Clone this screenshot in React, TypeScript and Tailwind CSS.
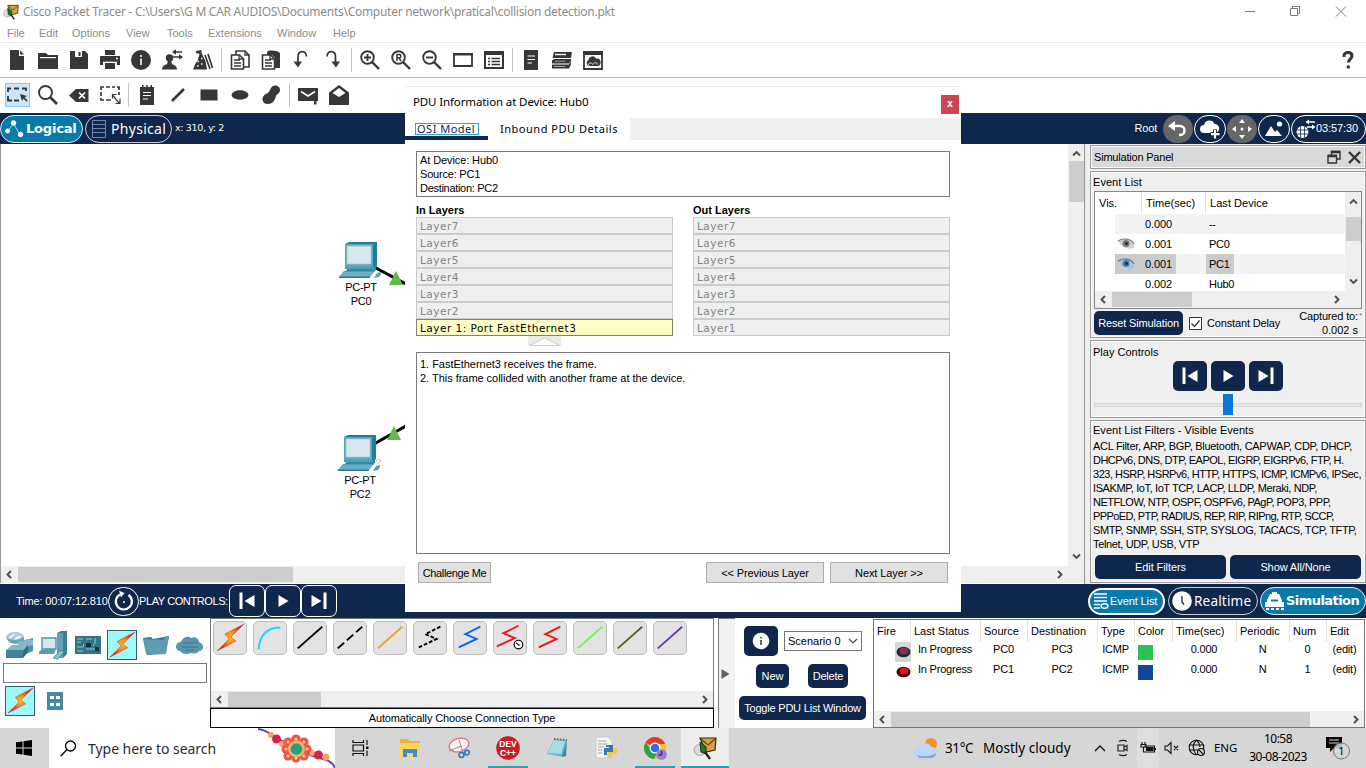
import React from "react";

type P = { children?: React.ReactNode; className?: string };

const Ic = ({ children, s = 22, c = "text-[#373737]", vb = "0 0 22 22" }: { children: React.ReactNode; s?: number; c?: string; vb?: string }) => (
  <svg width={s} height={s} viewBox={vb} className={`${c} block shrink-0`} fill="currentColor">
    {children}
  </svg>
);

const Tool = ({ children, active }: { children: React.ReactNode; active?: boolean }) => (
  <div className="flex h-full w-[31px] shrink-0 items-center justify-center">
    <div className={active ? "flex h-[24px] w-[25px] items-center justify-center border border-[#8fc6f0] bg-[#cbe6fb]" : ""}>
      <Ic>{children}</Ic>
    </div>
  </div>
);

const Sep = () => (
  <div className="flex h-full w-[6px] shrink-0 items-center justify-center">
    <div className="h-[24px] w-px bg-[#c4c4c4]" />
  </div>
);

const Chev = ({ d, className = "" }: { d: "l" | "r" | "u" | "d"; className?: string }) => {
  const p = { l: "M7 2 3.5 5.5 7 9", r: "M4 2 7.5 5.5 4 9", u: "M2 7.5 5.5 4 9 7.5", d: "M2 3.5 5.5 7 9 3.5" }[d];
  return (
    <svg width="11" height="11" viewBox="0 0 11 11" className={`block shrink-0 ${className}`} fill="none" stroke="#4e4e4e" strokeWidth="1.9">
      <path d={p} />
    </svg>
  );
};

const stroke = (w: number) => ({ fill: "none", stroke: "currentColor", strokeWidth: w });

const Lens = ({ children }: P) => (
  <>
    <circle cx="8.5" cy="8.5" r="6.3" {...stroke(1.9)} />
    <path d="m13 13 7 7" {...stroke(2.4)} />
    {children}
  </>
);

const Toolbar1 = () => (
  <div className="flex h-[35px] items-center border-b border-[#bdbdbd] bg-white pl-[1.5px]">
    <Tool><path d="M4 1h9v6h5v14H4z" /><path d="M14 1.2 18 5.6h-4z" /></Tool>
    <Tool><path d="M1 4h8l2 2h10v14H1z" /><path d="M3 8.6h16" stroke="#fff" strokeWidth="1.2" /></Tool>
    <Tool><path d="M2 2h15l3 3v15H2z" /><path d="M7 2h7v6H7z" fill="#fff" /><path d="M10.5 3h2v4h-2z" /></Tool>
    <Tool>
      <path d="M6 1h10v5H6zM1 7h20v9h-3v-3H4v3H1z" /><path d="M6 14h10v6H6z" />
      <path d="M4 13.2h14" stroke="#fff" strokeWidth="1" /><circle cx="18" cy="9.5" r="1" fill="#fff" />
    </Tool>
    <Tool><circle cx="11" cy="11" r="10" /><path d="M10 9.5h2V16h-2zM10 6h2v2h-2z" fill="#fff" opacity=".8" /></Tool>
    <Tool>
      <circle cx="8.5" cy="9" r="3.7" /><path d="M1 20.500c0-3.500 3-4.500 5-5.500l1-3h3l1 3c2 1 5 2 5 5.500z" />
      <path d="M12 3h9M12 8h9" {...stroke(1.3)} /><path d="m15 .3-4 2.700 4 2.700zM18 5.300l4 2.700-4 2.700z" />
    </Tool>
    <Tool>
      <path d="M4 2 9.500 1v3l4 8 1.500 8.500H1l2-5 3-5 1.500-5.500L4 4z" /><path d="m13 6 5 14M16 5l4.500 14" {...stroke(1.700)} />
      <path d="M5.500 12.500H7M9 9.500h1.500M9 15h1.500M5 17h1.500" stroke="#fff" strokeWidth="1.300" />
    </Tool>
    <Sep />
    <Tool>
      <path d="M7 6V2h9l4 4v12h-5" {...stroke(1.600)} /><path d="M2.500 6h8l4 4v10h-12z" {...stroke(1.600)} />
      <path d="M5 11h6M5 14h7M5 17h7M16 2v4h4M10 6v4h4" {...stroke(1.300)} />
    </Tool>
    <Tool>
      <path d="M7 3c2-2 9-2 13 1v15h-5V9l-3-3H7z" /><path d="M2.500 6h8l4 4v10h-12z" {...stroke(1.600)} />
      <path d="M5 11h6M5 14h7M5 17h7M10 6v4h4" {...stroke(1.300)} />
    </Tool>
    <Tool><path d="M15.500 7.500C15 1 7 1 7 8v6" {...stroke(1.700)} /><path d="M2.500 12.500h8.500l-4 6z" /></Tool>
    <Tool><path d="M5 7.500C5.500 1 13.500 1 13.500 8v6" {...stroke(1.700)} /><path d="M9.500 12.500H18l-4 6z" /></Tool>
    <Sep />
    <Tool><Lens><path d="M5 8.500h7M8.500 5v7" {...stroke(1.900)} /></Lens></Tool>
    <Tool><Lens><path d="M7 12V5.500h2.200a1.600 1.600 0 0 1 0 3.300H7M9 8.800l2 3.200" {...stroke(1.500)} /></Lens></Tool>
    <Tool><Lens><path d="M5 8.500h7" {...stroke(1.900)} /></Lens></Tool>
    <Tool><path d="M2 5h18v12H2z" {...stroke(1.800)} /><path d="M1 4h20v2.500H1z" /></Tool>
    <Tool><path d="M2 3h18v16H2z" {...stroke(2)} /><path d="M1 2h20v4H1z" /><path d="M5 9.500h2M5 12.500h2M5 15.500h2M8.500 9.500H17M8.500 12.500H17M8.500 15.500H17" {...stroke(1.400)} /></Tool>
    <Sep />
    <Tool><path d="M4 1h14v20H4z" /><path d="M7.500 7H15M7.500 10.500H15M7.500 14H12" stroke="#fff" strokeWidth="1.200" /></Tool>
    <Tool>
      <path d="M3 3h18l-1 6H1.500zM3 10h17v2l-2 2.500H1v-3zM1 15.500h17l2-3v3l-2 4H1z" />
      <path d="M4 5.500h11" stroke="#fff" strokeWidth="1.400" /><path d="M4 12.200h10M3 17.500h11" stroke="#bbb" strokeWidth=".8" />
    </Tool>
    <Tool>
      <path d="M2 3h18v17H2z" {...stroke(1.800)} /><path d="M1 2h20v4H1z" />
      <path d="M7 17a3.200 3.200 0 0 1-.5-6A4 4 0 0 1 14 9.500a3.700 3.700 0 0 1 1.500 7.500z" />
      <path d="M7 16.500c-2-2 2-4 4-1 1-3 5-2 4 0" stroke="#fff" strokeWidth=".8" fill="none" />
    </Tool>
    <div className="grow" />
    <div className="flex w-[36px] items-center justify-center">
      <Ic s={20} vb="0 0 20 20"><path d="M6 7V5.500C6 1.500 14 1.500 14 6c0 3-3.500 3-3.500 6.500" {...stroke(3)} /><circle cx="10.300" cy="17" r="1.800" /></Ic>
    </div>
  </div>
);

const Toolbar2 = () => (
  <div className="flex h-[35px] items-center bg-white pb-[2px] pl-[1.5px]">
    <Tool active>
      <path d="M2 8V4.500h3M8 4.500h5M16 4.500h4V7M2 12v4.500h4M8 16.500h5" {...stroke(1.800)} /><path d="m14 10 7 2-2.300 1.200 3 3.500-1.200 1-3-3.300L16 17z" />
    </Tool>
    <Tool><circle cx="8.500" cy="8.500" r="6.500" {...stroke(1.900)} /><path d="m13 13 7 7" {...stroke(2.600)} /></Tool>
    <Tool><path d="M1 11.500 8 5h12.500v13H8z" /><path d="m11 8.500 6 6M17 8.500l-6 6" stroke="#fff" strokeWidth="1.700" /></Tool>
    <Tool>
      <path d="M2 6V3h3M7 3h4M13 3h3M18 3h2v3M2 8v4M2 14v2h3M7 16h5M20 8v3" {...stroke(1.700)} /><path d="m13.500 11 7 8.500M21 14.500v5h-4.500M13.500 14.500v-4h4" {...stroke(1.200)} />
    </Tool>
    <Sep />
    <Tool><path d="M4 3h14v18H4z" /><path d="M6 1h1.500v3H6zM10.200 1h1.500v3h-1.500zM14.500 1H16v3h-1.500z" /><path d="M7 8.500h8M7 11.500h8M7 15h5" stroke="#fff" strokeWidth="1.200" /></Tool>
    <Tool><path d="M5 17 17 5" {...stroke(2.600)} /></Tool>
    <Tool><path d="M2.500 5.500h17v11h-17z" /></Tool>
    <Tool><ellipse cx="11" cy="11" rx="8.500" ry="4.700" /></Tool>
    <Tool><path d="M11 4c2-4 9-3 9 2 0 3.500-3 3.500-4 6-1 4-3 8-8 8C1 20 1 12 6 10c3-1 3.500-3 5-6z" /></Tool>
    <Sep />
    <Tool><path d="M1 4h20v13h-1.500v3.500h-2.500V17H1z" /><path d="M4 7.500 11 12l7-4.500" stroke="#fff" strokeWidth="1.500" fill="none" /></Tool>
    <Tool><path d="M1 8.500 11 1l10 7.500V21H1z" /><path d="M4.500 9 11 4l6.500 5L11 13z" fill="#fff" /></Tool>
  </div>
);

const NavBar = () => (
  <div className="flex h-[31px] items-center bg-[#10274c] font-['Noto_Sans',sans-serif] text-white">
    <div className="flex h-[28px] w-[83px] shrink-0 items-center rounded-full border-[1.5px] border-[#dff0f8] bg-[#077aa9] pl-[3px]">
      <svg width="22" height="22" viewBox="0 0 22 22" fill="#fff" stroke="#fff"><path d="m4 13 5.500-7.500L16 17" fill="none" strokeWidth=".7" /><circle cx="3.500" cy="13" r="2" /><circle cx="9.500" cy="5" r="2.300" /><circle cx="16.500" cy="16.500" r="2.300" /></svg>
      <span className="font-['DejaVu_Sans',sans-serif] text-[13px] font-bold tracking-[-0.2px]">Logical</span>
    </div>
    <div className="ml-[2px] flex h-[28px] w-[87px] shrink-0 items-center rounded-full border-[1.5px] border-[#c9cfda] pl-[5px]">
      <svg width="16" height="20" viewBox="0 0 16 20" fill="none" stroke="#7186ac"><path d="M1.500 1.500h13v17h-13zM1 5.500h14M1 9.500h14M1 13.500h14" /></svg>
      <span className="ml-[4px] text-[14px] tracking-[0.3px]">Physical</span>
    </div>
    <span className="ml-[3px] font-['DejaVu_Sans',sans-serif] text-[9.500px] tracking-[-0.35px]">x: 310, y: 2</span>
    <div className="grow" />
    <span className="mr-[6px] font-['Liberation_Sans',sans-serif] text-[11px] tracking-[-0.2px]">Root</span>
    <div className="mr-[1px] flex h-[28px] w-[30px] items-center justify-center rounded-[14px] bg-[#666]">
      <Ic c="text-white"><path d="M5 8h8c6 0 6 9 0 9h-1" {...stroke(2.500)} /><path d="M8 3v10L1 8z" /></Ic>
    </div>
    <div className="mr-[1px] flex h-[28px] w-[32px] items-center justify-center rounded-[14px] border-[1.5px] border-white">
      <Ic c="text-white"><path d="M5 15a4 4 0 0 1 0-8 5.500 5.500 0 0 1 10.500-1A4.500 4.500 0 0 1 16 15z" /><path d="M16 11.500v9M11.500 16h9" stroke="#10274c" strokeWidth="4" /><path d="M16 12v8.500M12 16.200h8.500" {...stroke(2.200)} /></Ic>
    </div>
    <div className="flex h-[28px] w-[30px] items-center justify-center rounded-[14px] bg-[#666]">
      <Ic c="text-white"><path d="m11 1 3 4H8zM11 21l3-4H8zM1 11l4-3v6zM21 11l-4-3v6z" /><circle cx="11" cy="11" r="1.500" /></Ic>
    </div>
    <div className="ml-[1px] flex h-[28px] w-[32px] items-center justify-center rounded-[14px] border-[1.5px] border-white">
      <Ic c="text-white"><path d="m2 18 6-10 4 6 2-2 5 6z" /><circle cx="16.500" cy="6" r="2.600" /></Ic>
    </div>
    <div className="ml-[1px] flex h-[28px] w-[75px] items-center rounded-[14px] border-[1.5px] border-white pl-[2px]">
      <svg width="22" height="22" viewBox="0 0 22 22" fill="#fff" stroke="#fff"><circle cx="8.500" cy="14" r="6" stroke="none" /><path d="M2.500 12h12M2.500 16h12M6.500 8.500v11M10.500 8.500v11" stroke="#10274c" strokeWidth=".8" /><path d="M13 4h8M13 9h7" strokeWidth="1.500" /><path d="m15 1.500-3.500 2.500 3.500 2.500zM18 6.500 21.500 9 18 11.500z" stroke="none" /></svg>
      <span className="font-['Liberation_Sans',sans-serif] text-[11px] tracking-[-0.1px]">03:57:30</span>
    </div>
  </div>
);

const PC = ({ extra }: { extra?: boolean }) => (
  <svg width="44" height="38" viewBox="0 0 44 38" className="block">
    <path d="M6 2 10 0h28v24l-4 3H6z" fill="#1d7f99" />
    <path d="M6 2h28v23H6z" fill="#5ba6bb" /><path d="M8 4h24v18H8z" fill="#d7e7ee" stroke="#a5cbd8" strokeWidth=".8" />
    <path d="M10 25h25l2-1v4l-3 2H6z" fill="#2a8aa3" /><path d="M6 26h29" stroke="#8fc6d4" strokeWidth=".7" />
    <path d="M5 29h31l-4 4H2z" fill="#4c9cb3" /><path d="m4 30-4 5h31l4-5z" fill="#6badc1" /><path d="M0 34.500h31v1.500H0z" fill="#2b7890" />
    <path d="m38 31 4-1v2l-2 3-5 1z" fill="#5c9fb5" />
    {extra && <path d="M38 26c3-3 5-1 4 1l-2 2" fill="none" stroke="#9ab" strokeWidth=".8" />}
  </svg>
);

const Bolt = ({ s = 30 }: { s?: number }) => (
  <svg width={s} height={s} viewBox="0 0 30 30" className="block">
    <defs>
      <radialGradient id="bolt"><stop offset="0" stopColor="#ffc400" /><stop offset=".4" stopColor="#ff8a1c" /><stop offset="1" stopColor="#e01c22" /></radialGradient>
    </defs>
    <path d="M29 1 10 11l4 5L2 28l19-10-5-4z" fill="url(#bolt)" stroke="#d2342a" strokeWidth=".5" />
  </svg>
);

const Canvas = () => (
  <div className="flex w-[1085px] shrink-0 flex-col border-r border-[#9a9a9a] bg-white">
    <div className="flex h-[422px]">
      <div className="relative grow overflow-hidden border-l border-[#999] font-['Liberation_Sans',sans-serif] text-[11px] leading-[14px] tracking-[-0.3px]">
        <svg className="absolute left-0 top-0" width="404" height="422" viewBox="1 144 404 422">
          <path d="M374 267 406 284M374 444 406 426" stroke="#000" strokeWidth="3" />
          <path d="m396 271 7 14h-14zM394 426l7 14h-14z" fill="#5dbb46" />
        </svg>
        <div className="absolute left-[338px] top-[98px]"><PC /></div>
        <div className="absolute left-[337px] top-[291px]"><PC extra /></div>
        <div className="absolute left-[330px] top-[136px] w-[60px] text-center">PC-PT<br />PC0</div>
        <div className="absolute left-[329px] top-[329px] w-[60px] text-center">PC-PT<br />PC2</div>
      </div>
      <div className="flex w-[16px] flex-col items-center bg-[#efefef] pb-[4px] pt-[4px]">
        <Chev d="u" />
        <div className="mt-[2px] h-[41px] w-[15px] bg-[#cdcdcd]" />
        <div className="grow" />
        <Chev d="d" />
      </div>
    </div>
    <div className="flex h-[17px] items-center border-l border-[#999] bg-[#efefef] pl-[3px] pr-[19px]">
      <Chev d="l" />
      <div className="ml-[3px] h-[15px] w-[275px] bg-[#cdcdcd]" />
      <div className="grow" />
      <Chev d="r" />
    </div>
  </div>
);

const Box = ({ children, className = "" }: P) => <div className={`border border-[#9b9b9b] shadow-[inset_0_0_0_1px_#fafafa] ${className}`}>{children}</div>;
const Btn = ({ children, className = "" }: P) => <div className={`flex shrink-0 items-center justify-center whitespace-nowrap rounded-[5px] bg-[#10274c] text-white ${className}`}>{children}</div>;

const PlayIcon = ({ k }: { k: number }) => (
  <svg width="20" height="20" viewBox="0 0 20 20" fill="#fff" className="block">
    {k === 0 && <path d="M2.500 1.500h3v16.500h-3zM17.500 4v12L7.500 10z" />}
    {k === 1 && <path d="m5.500 4 10 6-10 6z" />}
    {k === 2 && <path d="M14.500 1.500h3v16.500h-3zM2.500 4v12l10-6z" />}
  </svg>
);

const Eye = ({ blue }: { blue?: boolean }) => (
  <svg width="18" height="12" viewBox="0 0 18 12" className="block">
    <path d="M1 3c4-3 13-3 16 1v6c-5 2-12 0-16-7z" fill={blue ? "#a4c3dc" : "#d0d0d0"} />
    <path d="M1 3c4-3 13-3 16 3" fill="none" stroke={blue ? "#4c82ad" : "#888"} strokeWidth="1.200" />
    <circle cx="9" cy="5.500" r="3.500" fill={blue ? "#3c7db5" : "#777"} /><circle cx="9.500" cy="5.500" r="1.500" fill="#222" />
  </svg>
);

const EVENTS = [
  { t: "0.000", d: "--" },
  { t: "0.001", d: "PC0", eye: 1 },
  { t: "0.001", d: "PC1", eye: 2 },
  { t: "0.002", d: "Hub0" },
];

const FILTERS = [
  ["ACL Filter, ARP, BGP, Bluetooth, CAPWAP, CDP, DHCP,", "tracking-[-0.290px]"],
  ["DHCPv6, DNS, DTP, EAPOL, EIGRP, EIGRPv6, FTP, H.", "tracking-[-0.510px]"],
  ["323, HSRP, HSRPv6, HTTP, HTTPS, ICMP, ICMPv6, IPSec,", "tracking-[-0.490px]"],
  ["ISAKMP, IoT, IoT TCP, LACP, LLDP, Meraki, NDP,", "tracking-[-0.390px]"],
  ["NETFLOW, NTP, OSPF, OSPFv6, PAgP, POP3, PPP,", "tracking-[-0.500px]"],
  ["PPPoED, PTP, RADIUS, REP, RIP, RIPng, RTP, SCCP,", "tracking-[-0.590px]"],
  ["SMTP, SNMP, SSH, STP, SYSLOG, TACACS, TCP, TFTP,", "tracking-[-0.410px]"],
  ["Telnet, UDP, USB, VTP", "tracking-[-0.350px]"],
];

const SimPanel = () => (
  <div className="flex grow flex-col gap-[2px] bg-[#efefef] pl-[4px] pt-px font-['Liberation_Sans',sans-serif] text-[11px] leading-[14px] text-black">
    <Box className="flex h-[24px] items-center bg-[#d9d9d9] pl-[3px] pr-[4px]">
      <span className="tracking-[-0.2px]">Simulation Panel</span>
      <div className="grow" />
      <svg width="14" height="14" viewBox="0 0 14 14" fill="none" stroke="#333" strokeWidth="1.400"><path d="M4.500 5V1.500H13V9H9.500M1 5.500h8.500V13H1z" /><path d="M4 2h9M1 6h9" strokeWidth="2.500" /></svg>
      <svg className="ml-[7px]" width="13" height="13" viewBox="0 0 13 13" stroke="#333" strokeWidth="2.300"><path d="m1 1 11 11M12 1 1 12" /></svg>
    </Box>
    <Box className="flex h-[167px] flex-col pl-[3px] pr-[3px]">
      <div className="-ml-px h-[19px] pt-[3px] tracking-[0.05px]">Event List</div>
      <div className="flex h-[118px] flex-col border border-[#828790] bg-white">
        <div className="flex h-[99px]">
          <div className="flex grow flex-col overflow-hidden">
            <div className="flex h-[22px] shrink-0 items-center">
              <div className="w-[47px] border-r border-[#e2e2e2] pl-[4px] leading-[22px]">Vis.</div>
              <div className="w-[64px] border-r border-[#e2e2e2] pl-[4px] leading-[22px] tracking-[0.1px]">Time(sec)</div>
              <div className="pl-[4px] leading-[22px] tracking-[0.05px]">Last Device</div>
            </div>
            {EVENTS.map((e, i) => (
              <div key={i} className="flex h-[20px] shrink-0 pl-[20px]">
                <div className={`flex grow items-center ${i % 2 === 0 ? "bg-[#f3f3f3]" : ""}`}>
                  <div className={`flex h-full w-[61px] items-center tracking-[-0.1px] ${e.eye === 2 ? "bg-[#cbcbcb]" : ""}`}>
                    <div className="w-[30px] pl-[2px]">{e.eye && <Eye blue={e.eye === 2} />}</div>
                    {e.t}
                  </div>
                  <div className="w-[30px]" />
                  <div className={`flex h-full items-center pl-[3px] pr-[4px] tracking-[-0.3px] ${e.eye === 2 ? "bg-[#cbcbcb]" : ""}`}>{e.d}</div>
                </div>
              </div>
            ))}
          </div>
          <div className="flex w-[16px] flex-col items-center bg-[#efefef] pb-[4px] pt-[4px]">
            <Chev d="u" />
            <div className="mt-[10px] h-[24px] w-[15px] bg-[#cdcdcd]" />
            <div className="grow" />
            <Chev d="d" />
          </div>
        </div>
        <div className="flex grow items-center bg-[#efefef] pl-[3px] pr-[19px]">
          <Chev d="l" />
          <div className="ml-[3px] h-[15px] w-[80px] bg-[#cdcdcd]" />
          <div className="grow" />
          <Chev d="r" />
        </div>
      </div>
      <div className="flex grow items-center">
        <Btn className="h-[24px] w-[89px] tracking-[-0.15px]">Reset Simulation</Btn>
        <svg className="ml-[6px]" width="13" height="13" viewBox="0 0 13 13"><path d="M.5.5h12v12H.5z" fill="#fff" stroke="#333" /><path d="m2.500 6.500 3 3 5-6" fill="none" stroke="#333" strokeWidth="1.300" /></svg>
        <span className="ml-[5px] tracking-[-0.15px]">Constant Delay</span>
        <div className="grow text-right"><div className="flex justify-end tracking-[-0.15px]">Captured to:<span className="w-[4px] text-[8px] text-gray-500">*</span></div><div className="pr-[4px]">0.002 s</div></div>
      </div>
    </Box>
    <Box className="flex h-[78px] flex-col items-center px-[3px] pt-[3px]">
      <div className="-ml-[2px] h-[17px] w-full pt-px leading-[14px]">Play Controls</div>
      <div className="flex gap-[4px]">
        {[0, 1, 2].map((k) => <Btn key={k} className="h-[30px] w-[34px]"><PlayIcon k={k} /></Btn>)}
      </div>
      <div className="mt-[3px] flex h-[21px] w-full items-center">
        <div className="h-[4px] w-[129px] border border-[#d5d5d5] bg-[#e7e7e7]" />
        <div className="h-[21px] w-[10px] bg-[#0a78d7]" />
        <div className="h-[4px] grow border border-[#d5d5d5] bg-[#e7e7e7]" />
      </div>
    </Box>
    <Box className="h-[163px] px-[2px] pt-[2px]">
      <div className="mb-[2px] tracking-[0.02px]">Event List Filters - Visible Events</div>
      {FILTERS.map(([t, c]) => <div key={t} className={`whitespace-nowrap ${c}`}>{t}</div>)}
      <div className="mt-[4px] flex gap-[4px] pl-[2px]">
        <Btn className="h-[24px] w-[131px] tracking-[-0.1px]">Edit Filters</Btn>
        <Btn className="h-[24px] w-[131px] tracking-[-0.1px]">Show All/None</Btn>
      </div>
    </Box>
  </div>
);

const ControlBar = () => (
  <div className="flex h-[34px] items-center bg-[#10274c] pl-[16px] font-['Liberation_Sans',sans-serif] text-[11px] text-white">
    <span className="w-[92px] whitespace-nowrap tracking-[-0.15px]">Time: 00:07:12.810</span>
    <div className="flex h-[29px] w-[31px] items-center justify-center rounded-full border-[1.500px] border-white">
      <svg width="22" height="22" viewBox="0 0 22 22" fill="none" stroke="#fff" strokeWidth="2.200"><path d="M15.500 5A8 8 0 1 1 7 4.500" /><path d="m6 .8 5.500 2.200-3.500 4.500z" fill="#fff" stroke="none" /><circle cx="11" cy="12" r="1" fill="#fff" stroke="none" /></svg>
    </div>
    <span className="w-[90px] whitespace-nowrap tracking-[-0.4px]">PLAY CONTROLS:</span>
    {[0, 1, 2].map((k) => <div key={k} className="flex h-[32px] w-[36px] items-center justify-center rounded-[7px] border-[1.500px] border-white"><PlayIcon k={k} /></div>)}
    <div className="grow" />
    <div className="flex h-[27px] w-[77px] items-center rounded-full border-2 border-white bg-[#077aa9] pl-[3px] tracking-[-0.1px]">
      <svg width="16" height="18" viewBox="0 0 16 18" fill="none" stroke="#fff" strokeWidth="1.400"><path d="M1 2h13M1 5.500h13M1 9h13M1 12.500h6M1 16h6" /><ellipse cx="11.500" cy="14" rx="3.500" ry="2.300" /></svg>
      <span className="ml-px whitespace-nowrap tracking-[-0.1px]">Event List</span>
    </div>
    <div className="ml-[3px] flex h-[28px] w-[90px] items-center rounded-full border-[1.500px] border-[#c9cfda] pl-[3px] font-['Noto_Sans',sans-serif] text-[13.500px]">
      <svg width="20" height="20" viewBox="0 0 20 20"><circle cx="10" cy="10" r="9.800" fill="#fff" /><path d="M10 5v6l2 2.500" fill="none" stroke="#10274c" strokeWidth="1.300" /></svg>
      <span className="ml-[2px] tracking-[0.2px]">Realtime</span>
    </div>
    <div className="ml-[2px] flex h-[28px] w-[106px] items-center rounded-full border-[1.500px] border-[#dff0f8] bg-[#077aa9] pl-[3px] font-['DejaVu_Sans',sans-serif] text-[13px] font-bold tracking-[-0.55px]">
      <svg width="21" height="20" viewBox="0 0 21 20" fill="#fff"><path d="M3 9 6 3h9l3 6v5H3zM8 1h5v3H8zM1 11h3v3H1zM17 11h3v3h-3z" /><path d="M7 9.500h7" stroke="#077aa9" strokeWidth="2" /><path d="M1 14h19v2H1zM2 17h3v2H2zM7 17h3v2H7zM12 17h3v2h-3zM17 17h3v2h-3z" /></svg>
      <span className="ml-px">Simulation</span>
    </div>
  </div>
);

const Devices = () => (
  <div className="flex w-[210px] shrink-0 flex-col bg-white pt-[12px]">
    <div className="flex h-[30px] items-center gap-[4px] pl-[5px]">
      <svg width="30" height="30" viewBox="0 0 30 30"><ellipse cx="10" cy="7" rx="9" ry="5" fill="#a9ccd8" /><path d="M1 7c3 4 14 4 18 0v5c-4 3-13 2-15 0z" fill="#6ca5b9" /><path d="m4 8 6-4M10 9l6-3" stroke="#fff" strokeWidth="1.500" /><path d="m12 12 16-4v13l-7 3z" fill="#4e91a9" /><path d="m12 12 12-3 4 1v5l-14 3z" fill="#86b8c8" /><path d="m1 20 6-5h16l-5 6z" fill="#87b7c7" /><path d="M1 20h17v8H1z" fill="#41829a" /><path d="m18 21 5-6v7l-5 6z" fill="#2d6a80" /></svg>
      <svg width="30" height="30" viewBox="0 0 30 30"><path d="m18 3 4-2h6v23l-4 4h-6z" fill="#3c8097" /><path d="M18 3h6v25h-6z" fill="#64a0b5" /><path d="M3 8h14v11H3z" fill="#d6e7ed" stroke="#4e93aa" strokeWidth="1.400" /><path d="m0 22 3-3h14l-2 5H0z" fill="#5a9db2" /><path d="m14 28 8-8 3 2-6 7z" fill="#92bdcb" stroke="#3c8097" strokeWidth=".8" /></svg>
      <svg width="30" height="30" viewBox="0 0 30 30"><path d="M2 6h26v18H2z" fill="#2f7489" /><path d="M4 9h6M4 12h4M13 9h6M22 8v6M4 17h6M13 19h9M4 21h6" stroke="#9ac9d6" strokeWidth="1" /><path d="M13 13h5v4h-5zM22 17h4v4h-4z" fill="#202d36" /><path d="M10 14h1v3h-1zM20 14h1v2h-1z" fill="#d99" /></svg>
      <div className="flex size-[30px] items-center justify-center border border-[#31616b] bg-[#9cf9fc]"><Bolt s={28} /></div>
      <svg width="30" height="30" viewBox="0 0 30 30"><path d="m2 8 8-1 2 2 16-3-4 18-18 1z" fill="#347d94" /><path d="m2 9 20 1 3-4h3l-3 18H5z" fill="#5c9db2" /></svg>
      <svg width="30" height="30" viewBox="0 0 30 30"><path d="M5 21c-6-1-5-9 1-9 2-6 8-6 10-4 4-2 8 1 8 4 6 2 5 9 0 9-2 3-7 3-8 2-4 2-9 1-11-2z" fill="#5996ab" /><path d="M8 13h14M7 17h16M11 20h8" stroke="#37768c" strokeWidth="1.100" /></svg>
    </div>
    <div className="ml-[3px] mt-[3px] h-[20px] w-[204px] border border-[#7a7a7a] bg-white" />
    <div className="mt-[3px] flex h-[30px] items-center pl-[5px]">
      <div className="flex size-[30px] items-center justify-center border border-[#31616b] bg-[#9cf9fc]"><Bolt s={28} /></div>
      <svg className="ml-[12px]" width="16" height="18" viewBox="0 0 16 18"><path d="M0 0h16v18H0z" fill="#4889a1" /><path d="M3 4h4v3H3zM9 4h4v3H9zM3 11h4v3H3zM9 11h4v3H9z" fill="#fff" /></svg>
    </div>
  </div>
);

const L = ({ c, dash }: { c: string; dash?: string }) => <path d="M4 28 30 5" stroke={c} strokeWidth="2" strokeDasharray={dash} />;
const Z = ({ c, dash }: { c: string; dash?: string }) => <path d="M5 27 24 18 12 13 28 5" fill="none" stroke={c} strokeWidth="2" strokeDasharray={dash} />;

const CABLES: React.ReactNode[] = [
  null,
  <path d="M5 29C6 14 14 6 28 6" fill="none" stroke="#2fd6f3" strokeWidth="2.200" />,
  <L c="#000" />,
  <L c="#000" dash="9 4" />,
  <L c="#f0a01e" />,
  <Z c="#000" dash="4 2" />,
  <Z c="#1260f2" />,
  <><path d="M3 26 22 17 10 12 26 4" fill="none" stroke="#f01414" strokeWidth="2" /><circle cx="26" cy="24" r="4.600" fill="#fff" stroke="#000" strokeWidth="1.200" /><path d="m23.500 22 2.500 2.500h2" fill="none" stroke="#000" strokeWidth="1.200" /></>,
  <Z c="#f01414" />,
  <L c="#76f34d" />,
  <L c="#606018" />,
  <L c="#6a3aa8" />,
];

const Connections = () => (
  <div className="flex w-[504px] shrink-0 flex-col font-['Liberation_Sans',sans-serif] text-[11px]">
    <div className="flex h-[90px] flex-col border border-[#777] bg-white">
      <div className="flex h-[72px] gap-[6px] pl-[2px] pt-[2px]">
        {CABLES.map((c, i) => (
          <div key={i} className="flex size-[34px] shrink-0 items-center justify-center rounded-[5px] border border-[#bcbcbc] bg-[#e3e3e3]">
            {i === 0 ? <Bolt s={30} /> : <svg width="32" height="32" viewBox="0 0 34 34">{c}</svg>}
          </div>
        ))}
      </div>
      <div className="flex h-[16px] items-center bg-[#efefef] pl-[3px] pr-[3px]">
        <Chev d="l" />
        <div className="ml-[3px] h-[15px] w-[93px] bg-[#cdcdcd]" />
        <div className="grow" />
        <Chev d="r" />
      </div>
    </div>
    <div className="flex h-[20px] items-center justify-center border border-black bg-white tracking-[-0.15px]">Automatically Choose Connection Type</div>
  </div>
);

const COLS: [string, string, string, string][] = [
  ["Fire", "w-[37px]", "", ""],
  ["Last Status", "w-[70px]", "In Progress", "In Progress"],
  ["Source", "w-[47px]", "PC0", "PC1"],
  ["Destination", "w-[70px]", "PC3", "PC2"],
  ["Type", "w-[37px]", "ICMP", "ICMP"],
  ["Color", "w-[38px]", "bg-[#2bc253]", "bg-[#11479c]"],
  ["Time(sec)", "w-[64px]", "0.000", "0.000"],
  ["Periodic", "w-[53px]", "N", "N"],
  ["Num", "w-[37px]", "0", "1"],
  ["Edit", "w-[37px]", "(edit)", "(edit)"],
];

const PduTable = () => (
  <div className="mt-px flex h-[109px] w-[492px] shrink-0 flex-col border border-[#777] bg-white">
    <div className="flex h-[91px] text-black">
      {COLS.map(([h, w, a, b], i) => (
        <div key={h} className={`flex shrink-0 flex-col ${w}`}>
          <div className={`flex h-[22px] items-center whitespace-nowrap pl-[3px] ${i < 9 ? "border-r border-[#e2e2e2]" : ""}`}>{h}</div>
          {[a, b].map((v, r) => {
            const place = i === 0 ? "justify-end" : i === 5 ? "justify-start pl-[3px]" : "-mt-[3px] mb-[3px] justify-center pr-[2px] tracking-[-0.2px]";
            return (
              <div key={r} className={`flex h-[20px] items-center whitespace-nowrap ${place}`}>
                {i === 0 ? (
                  <div className={`flex h-[20px] w-[16px] items-center justify-center ${r ? "" : "bg-[#d5d5d5]"}`}>
                    <svg width="15" height="12" viewBox="0 0 15 12"><ellipse cx="7.500" cy="6" rx="7" ry="5.300" fill={r ? "#300" : "#123040"} /><ellipse cx="8" cy="5" rx="4.300" ry="3.600" fill={r ? "#f01010" : "#8e2c50"} /></svg>
                  </div>
                ) : i === 5 ? (
                  <div className={`size-[15px] ${v}`} />
                ) : (
                  v
                )}
              </div>
            );
          })}
        </div>
      ))}
    </div>
    <div className="flex h-[16px] items-center bg-[#efefef] pl-[3px] pr-[3px]">
      <Chev d="l" />
      <div className="ml-[3px] h-[15px] w-[419px] bg-[#cdcdcd]" />
      <div className="grow" />
      <Chev d="r" />
    </div>
  </div>
);

const Scenario = () => (
  <div className="flex w-[138px] shrink-0 flex-col bg-white pl-[4px] pt-[8px]">
    <div className="flex items-center pl-[5px]">
      <Btn className="h-[30px] w-[34px]"><svg width="18" height="18" viewBox="0 0 18 18"><circle cx="9" cy="9" r="8.300" fill="#fff" /><path d="M9 8v5M9 5v1.500" stroke="#10274c" strokeWidth="1.400" /></svg></Btn>
      <div className="ml-[6px] flex h-[20px] w-[78px] items-center justify-between border border-[#777] pl-[3px] pr-[3px]">
        <span className="whitespace-nowrap">Scenario 0</span>
        <svg width="10" height="8" viewBox="0 0 10 8" fill="none" stroke="#444" strokeWidth="1.100"><path d="m1 2 4 4 4-4" /></svg>
      </div>
    </div>
    <div className="mt-[8px] flex gap-[19px] pl-[17px]">
      <Btn className="h-[24px] w-[33px]">New</Btn>
      <Btn className="h-[24px] w-[40px] tracking-[-0.2px]">Delete</Btn>
    </div>
    <Btn className="mt-[8px] h-[24px] w-[127px] tracking-[-0.2px]">Toggle PDU List Window</Btn>
  </div>
);

const PtLogo = ({ s }: { s: number }) => (
  <svg width={s} height={s} viewBox="0 0 24 24" className="block">
    <ellipse cx="7" cy="14" rx="6" ry="5.500" fill="#d8dcda" stroke="#999" strokeWidth=".8" />
    <path d="M7 2h16l-1 12-9 2z" fill="#d9a243" stroke="#3b2a10" strokeWidth="1.200" /><path d="m8 3 7 6 7-6" fill="none" stroke="#6d4411" strokeWidth="1.300" />
    <path d="m7 6 6 5v7l-5-2z" fill="#167a2b" stroke="#0a3b14" /><path d="m12 16 5 7" stroke="#222" strokeWidth="2.200" />
  </svg>
);

const Task = ({ children, on, className = "w-[49px]" }: P & { on?: boolean }) => (
  <div className={`flex h-[40px] shrink-0 flex-col items-center ${className}`}>
    <div className="flex h-[38px] items-center pt-[2px]">{children}</div>
    {on && <div className="h-[2px] w-full bg-[#18a9b4]" />}
  </div>
);

const Taskbar = () => (
  <div className="flex h-[40px] shrink-0 items-center bg-[#d6d6d6] font-['Noto_Sans',sans-serif] text-black">
    <div className="flex w-[49px] justify-center pr-[1px]"><svg width="16" height="16" viewBox="0 0 16 16"><path d="M0 2.300 6.500 1.400v6H0zM7.500 1.200 16 0v7.400H7.500zM0 8.500h6.500v6.100L0 13.700zM7.500 8.500H16V16l-8.500-1.200z" /></svg></div>
    <div className="flex h-[40px] w-[286px] items-center bg-white pl-[11px]">
      <svg width="17" height="17" viewBox="0 0 17 17" fill="none" stroke="#000" strokeWidth="1.300"><circle cx="10.500" cy="6" r="5" /><path d="M7 9.500.8 16" /></svg>
      <span className="ml-[11px] whitespace-nowrap text-[14px] tracking-[-0.04px] text-[#2b2b2b]">Type here to search</span>
      <div className="grow" />
      <svg width="77" height="40" viewBox="0 0 77 40">
        <path d="M0 1c10 1 13 6 20 10l30 15c12 6 23 4 27 14" fill="none" stroke="#5b4aa0" strokeWidth="2" />
        <circle cx="13" cy="7" r="3" fill="#eaa765" /><circle cx="18.500" cy="11" r="4.500" fill="#d91f4d" /><circle cx="24" cy="16" r="3" fill="#eaa765" />
        <circle cx="54" cy="25" r="3" fill="#eaa765" /><circle cx="60.500" cy="27" r="4.500" fill="#d91f4d" /><circle cx="68" cy="29" r="3.500" fill="#eaa765" />
        {[[38, 11], [46, 14], [49, 21], [46, 28], [38, 30], [30, 28], [28, 21], [30, 14]].map(([x, y]) => <circle key={`${x}-${y}`} cx={x} cy={y} r="4.600" fill="#ee5547" />)}
        <circle cx="38.500" cy="21" r="8.500" fill="#efb071" />
        {[[38, 11], [46, 14], [49, 21], [46, 28], [38, 30], [30, 28], [28, 21], [30, 14]].map(([x, y]) => <circle key={`${x}-${y}`} cx={x} cy={y} r="1.500" fill="#f9cf92" />)}
        <circle cx="38.500" cy="21" r="5.800" fill="#22a17c" />
      </svg>
    </div>
    <div className="flex w-[50px] justify-center"><svg width="17" height="16" viewBox="0 0 17 16" fill="none" stroke="#111" strokeWidth="1.200"><path d="M1 0v2.500h10.500V0M1 5h10.500v6H1zM1 16v-2.500h10.500V16M15 0v5M15 10.500V16" /><path d="M14 6.500h2.500V9H14z" fill="#111" stroke="none" /></svg></div>
    <Task><svg width="22" height="20" viewBox="0 0 22 20"><path d="M1 1h8l2 2h10v16H1z" fill="#e9b63c" /><path d="M1 5h20v14H1z" fill="#fbd65f" /><path d="M4 11h14v8h-4v-4H8v4H4z" fill="#3a8fd0" /></svg></Task>
    <Task><svg width="26" height="22" viewBox="0 0 26 22" fill="none"><ellipse cx="13" cy="8" rx="10" ry="6.500" transform="rotate(-15 13 8)" fill="#f8f4f6" stroke="#dd6f86" strokeWidth="1.300" /><path d="m3 14 12-5M13 3l4 12" stroke="#b97888" /><circle cx="15.500" cy="18" r="2.500" stroke="#3079bd" strokeWidth="1.600" /><circle cx="21" cy="15.500" r="2.300" stroke="#3079bd" strokeWidth="1.600" /></svg></Task>
    <Task on className="ml-[5px] w-[40px]"><svg width="24" height="24" viewBox="0 0 24 24"><circle cx="12" cy="12" r="11.800" fill="#c91d24" /><text x="12" y="11" fontSize="8.500" fontWeight="bold" textAnchor="middle" fill="#fff" fontFamily="Liberation Sans">DEV</text><text x="12" y="19.500" fontSize="8.500" fontWeight="bold" textAnchor="middle" fill="#fff" fontFamily="Liberation Sans">C++</text></svg></Task>
    <Task className="ml-[4px] w-[49px]"><svg width="24" height="22" viewBox="0 0 24 22"><path d="m9 2 13 1-3 17-17-3z" fill="#6db5cd" /><path d="m9 3 11 1-4 13-13-1z" fill="#a9dbe6" /><path d="m9 2 13 1" stroke="#5b6d76" strokeWidth="2" strokeDasharray="1.500 1.500" /><path d="m22 3-1 16-4 1z" fill="#3b87a1" /></svg></Task>
    <Task className="w-[50px]"><svg width="24" height="24" viewBox="0 0 24 24"><path d="M2 1h12l4 4v17H2z" fill="#f4f4f4" stroke="#ccc" /><path d="M4 5h8M4 8h9M4 11h6M4 14h4M4 17h4" stroke="#9aa" /><path d="M12 9h7v7h-6v3h-3v-7h5v-1h-3z" fill="#3c78aa" /><path d="M19 12h4v6h-5v4h-5v-4l1-2h5z" fill="#f5cb45" /></svg></Task>
    <Task on className="ml-[4px] w-[40px]">
      <svg width="24" height="24" viewBox="0 0 24 24"><circle cx="12" cy="12" r="11" fill="#fbc116" /><path d="M12 12 2.500 6.500A11 11 0 0 1 21.500 6.500L22 8H12z" fill="#e33b2e" /><path d="M2.500 6.500A11 11 0 0 0 11 23l4-8-6-1z" fill="#2da04e" /><circle cx="12" cy="12" r="5.500" fill="#fff" /><circle cx="12" cy="12" r="4.300" fill="#2f72de" /><circle cx="18.500" cy="18.500" r="5.300" fill="#9a7bd6" /><path d="M18.500 15v4h-3" stroke="#432a80" strokeWidth="1.500" fill="none" /></svg>
    </Task>
    <Task on className="ml-[6px] w-[48px] bg-[#ededed]"><PtLogo s={24} /></Task>
    <div className="grow" />
    <svg width="26" height="22" viewBox="0 0 26 22"><circle cx="18" cy="7" r="6" fill="#f6922a" /><path d="M6 21a5 5 0 0 1-.5-10A7 7 0 0 1 18 9.500 6 6 0 0 1 20 21z" fill="#bdd5f8" /><path d="M4 18c3 2 14 2 19-2a5 5 0 0 1-4 5H6z" fill="#7fa6e8" /></svg>
    <span className="ml-[6px] w-[38px] whitespace-nowrap text-[13.500px] tracking-[-0.4px]">31°C</span>
    <span className="w-[87px] whitespace-nowrap text-[13.500px] tracking-[0.02px]">Mostly cloudy</span>
    <div className="flex w-[66px] items-center justify-center"><svg width="12" height="8" viewBox="0 0 12 8" fill="none" stroke="#111" strokeWidth="1.300" className="ml-[-7px]"><path d="m1 7 5-5 5 5" /></svg></div>
    <div className="-ml-[20px] flex h-[40px] w-[21px] items-center"><svg width="14" height="18" viewBox="0 0 14 18" fill="none" stroke="#222" strokeWidth="1.200"><path d="M2 6h6v6H2zM8 8l3-1.500v5L8 10M3 2.500c2-1.500 6-1.500 8 0M3 15.500c2 1.500 6 1.500 8 0" /></svg></div>
    <div className="flex h-[40px] w-[22px] items-center justify-center bg-[#dedede]"><svg width="16" height="14" viewBox="0 0 16 14" fill="none" stroke="#111" strokeWidth="1.100"><path d="M4.500 5h10v6h-9M2 1v2M5 1v2M1 3.500h5V6H1zM3.500 6v5H6" /><path d="M6.500 6.500h6.500v3H6.500z" fill="#111" /><path d="M15.500 7v2" /></svg></div>
    <div className="flex w-[25px] items-center justify-center"><svg width="15" height="14" viewBox="0 0 15 14" fill="none" stroke="#111" strokeWidth="1.100"><path d="M1 5h2.500L7 1.500v11L3.500 9H1zM10 5l4 4M14 5l-4 4" /></svg></div>
    <div className="flex w-[26px] items-center justify-center"><svg width="18" height="18" viewBox="0 0 18 18" fill="none" stroke="#111" strokeWidth="1.100"><circle cx="8.500" cy="8.500" r="7.300" /><path d="M1 6h15M1 11h8M8.500 1c-5 5-4 10 0 15M8.500 1c2 2 3.500 4 3.500 7" /><circle cx="13" cy="13" r="3.500" fill="#d6d6d6" /><path d="m10.500 10.500 5 5" /></svg></div>
    <span className="ml-[4px] w-[25px] text-[11.500px] tracking-[-0.1px]">ENG</span>
    <div className="ml-[8px] w-[62px] whitespace-nowrap text-center text-[12px] leading-[18px] tracking-[-0.5px]">10:58<br />30-08-2023</div>
    <div className="ml-[16px] flex w-[41px]">
      <svg width="26" height="26" viewBox="0 0 26 26"><path d="M1 2h16v11H9l-4 4v-4H1z" /><path d="M4 5h10M4 8h10" stroke="#d6d6d6" strokeWidth="1.200" /><circle cx="16.500" cy="16" r="8" fill="#d6d6d6" fillOpacity=".85" stroke="#777" /><text x="16.500" y="20" fontSize="11" textAnchor="middle" fontFamily="Noto Sans">1</text></svg>
    </div>
  </div>
);

const LayerList = ({ first, head }: { first?: boolean; head: string }) => (
  <div className="w-[257px]">
    <div className="h-[14px] font-['Liberation_Sans',sans-serif] text-[11px] font-bold leading-[14px]">{head}</div>
    {[7, 6, 5, 4, 3, 2, 1].map((n) => {
      const hot = first && n === 1;
      return (
        <div key={n} className={`h-[17px] border pl-[3px] leading-[16px] tracking-[0.48px] ${hot ? "border-[#828270] bg-[#ffffc6] text-black" : "border-[#cbcbcb] bg-[#efefef] text-[#858585]"}`}>
          {hot ? "Layer 1: Port FastEthernet3" : `Layer${n}`}
        </div>
      );
    })}
  </div>
);

const GBtn = ({ children, className }: P) => <div className={`flex h-[21px] items-center justify-center whitespace-nowrap border border-[#adadad] bg-[#e1e1e1] ${className}`}>{children}</div>;

const Dialog = () => (
  <div className="absolute left-[405px] top-[86px] flex h-[526px] w-[556px] flex-col border-t border-[#ececec] bg-white font-['Liberation_Sans',sans-serif] text-[11px] leading-[14px] text-black">
    <div className="flex h-[31px] items-center justify-between pl-[8px] pr-[2px]">
      <span className="mb-[2px] font-['Noto_Sans',sans-serif] text-[11.500px] tracking-[-0.12px]">PDU Information at Device: Hub0</span>
      <div className="mt-[3px] flex h-[19px] w-[18px] items-center justify-center bg-[#c6494f] text-[10px] font-bold text-white">x</div>
    </div>
    <div className="flex h-[22px] font-['Noto_Sans',sans-serif] text-[11px]">
      <div className="w-[83px] border-b-[4px] border-[#10274c] pl-[10px] pt-[5px] text-[#10274c]">
        <div className="h-[12px] w-[64px] whitespace-nowrap border border-[#2aa5c4] pl-px leading-[9px] tracking-[0.5px]">OSI Model</div>
      </div>
      <div className="w-[142px] whitespace-nowrap pl-[12px] leading-[21px] tracking-[0.52px]">Inbound PDU Details</div>
      <div className="grow bg-[#efefef]" />
    </div>
    <div className="ml-[11px] mt-[11px] h-[46px] w-[534px] border border-[#7a7a7a] pl-[3px] pt-px tracking-[-0.1px]">At Device: Hub0<br /><span className="tracking-[-0.2px]">Source: PC1</span><br /><span className="tracking-[-0.3px]">Destination: PC2</span></div>
    <div className="mt-[6px] flex gap-[20px] pl-[11px] font-['DejaVu_Sans',sans-serif] text-[10.500px]">
      <LayerList first head="In Layers" />
      <LayerList head="Out Layers" />
    </div>
    <svg className="ml-[123px] block" width="33" height="10" viewBox="0 0 33 10"><path d="M0 0h33v10H0z" fill="#ebebeb" /><path d="M1.500 9.500 16.500 2l15 7.500z" fill="#fff" stroke="#ccc" /></svg>
    <div className="ml-[11px] mt-[6px] h-[202px] w-[534px] border border-[#7a7a7a] pl-[3px] pt-[4px] tracking-[-0.03px]">1. FastEthernet3 receives the frame.<br />2. This frame collided with another frame at the device.</div>
    <div className="mt-[8px] flex pl-[13px]">
      <GBtn className="w-[73px] tracking-[-0.35px]">Challenge Me</GBtn>
      <GBtn className="ml-[215px] w-[118px] tracking-[-0.1px]">&lt;&lt; Previous Layer</GBtn>
      <GBtn className="ml-[6px] w-[118px] tracking-[-0.1px]">Next Layer &gt;&gt;</GBtn>
    </div>
  </div>
);

export default function App() {
  return (
    <div className="relative flex h-[768px] w-[1366px] flex-col overflow-hidden bg-white">
      <div className="flex h-[24px] items-center pl-[3px]">
        <PtLogo s={16} />
        <span className="ml-[4px] whitespace-nowrap font-['Noto_Sans',sans-serif] text-[12px] tracking-[-0.28px] text-[#8c8c8c]">Cisco Packet Tracer - C:\Users\G M CAR AUDIOS\Documents\Computer network\pratical\collision detection.pkt</span>
        <div className="grow" />
        <svg width="104" height="12" viewBox="0 0 104 12" fill="none" stroke="#7c7c7c" className="mb-[3px] mr-[17px]"><path d="M0 6.500h10M45.500 3.500h7v7h-7zM47.500 3.500v-2h7v7h-2M91 1.500l10 10M101 1.500l-10 10" /></svg>
      </div>
      <div className="flex h-[19px] items-center border-b border-[#ececec] font-['Liberation_Sans',sans-serif] text-[11px] text-[#8c8c8c]">
        <span className="w-[39px] pl-[7px]">File</span>
        <span className="w-[33px]">Edit</span>
        <span className="w-[54px]">Options</span>
        <span className="w-[41px]">View</span>
        <span className="w-[41px]">Tools</span>
        <span className="w-[69px]">Extensions</span>
        <span className="w-[56px]">Window</span>
        <span>Help</span>
      </div>
      <Toolbar1 />
      <Toolbar2 />
      <NavBar />
      <div className="flex h-[440px] shrink-0">
        <Canvas />
        <div className="w-px bg-[#e6e6e6]" />
        <SimPanel />
      </div>
      <ControlBar />
      <div className="flex h-[110px] shrink-0 font-['Liberation_Sans',sans-serif] text-[11px]">
        <Devices />
        <Connections />
        <div className="ml-[4px] flex w-[17px] items-center border-l border-t border-[#777] bg-[#f2f2f2] pl-[2px]"><svg width="9" height="10" viewBox="0 0 9 10"><path d="M.5 0 8.500 5l-8 5z" fill="#606060" /></svg></div>
        <Scenario />
        <PduTable />
      </div>
      <Taskbar />
      <Dialog />
    </div>
  );
}
